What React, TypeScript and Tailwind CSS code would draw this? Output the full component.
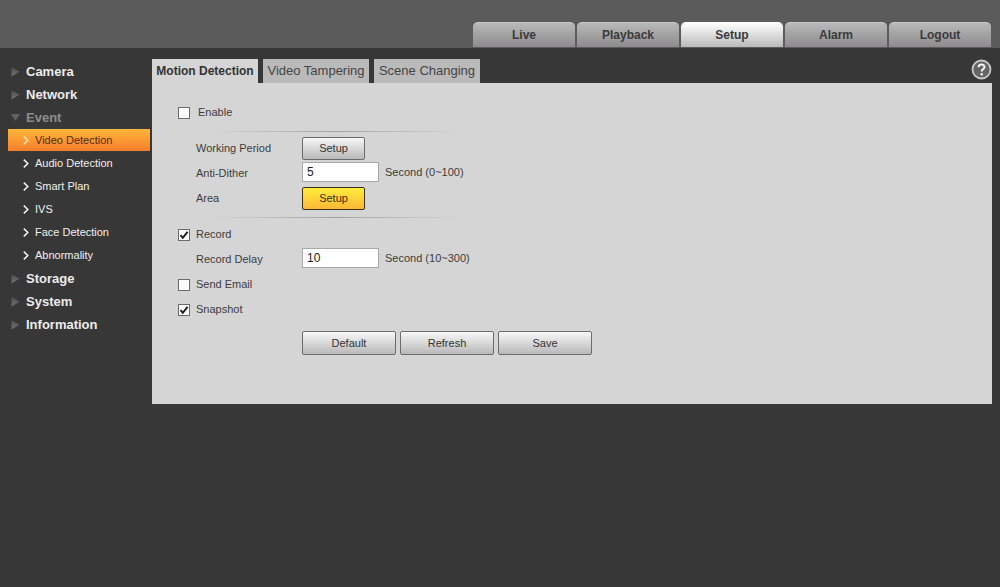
import { useState, type ReactNode } from "react";

const topTabs = ["Live", "Playback", "Setup", "Alarm", "Logout"];
const pageTabs = ["Motion Detection", "Video Tampering", "Scene Changing"];
const eventItems = [
  "Video Detection",
  "Audio Detection",
  "Smart Plan",
  "IVS",
  "Face Detection",
  "Abnormality",
];

function SectionLink({ label, open = false }: { label: string; open?: boolean }) {
  return (
    <a
      href="#"
      className={`flex h-[23px] items-center gap-1.5 pl-[3px] text-[13px] font-bold ${
        open ? "text-[#8c8c8c]" : "text-[#ececec]"
      }`}
    >
      <svg width="9" height="10" viewBox="0 0 9 10" aria-hidden="true">
        <defs>
          <linearGradient id="arrow" x1="0" y1="0" x2="0" y2="1">
            <stop offset="0" stopColor="#4c4c4c" />
            <stop offset="1" stopColor="#727272" />
          </linearGradient>
        </defs>
        <path d={open ? "M0 1H9L4.500 8Z" : "M0.500 0V9.500L8.500 4.800Z"} fill={open ? "#626262" : "url(#arrow)"} />
      </svg>
      {label}
    </a>
  );
}

function SubLink({ label, active }: { label: string; active: boolean }) {
  return (
    <a
      href="#"
      aria-current={active ? "page" : undefined}
      className={`mb-px flex h-[22px] items-center gap-1.5 pl-[15px] text-[11px] ${
        active
          ? "bg-linear-to-b from-[#fdb53c] to-[#f77d2b] text-[#4f2d12]"
          : "text-[#f0f0f0]"
      }`}
    >
      <svg width="6" height="9" viewBox="0 0 6 9" fill="none" aria-hidden="true">
        <path
          d="M0.800 0.600L4.800 4.500L0.800 8.400"
          stroke={active ? "#ffe3a8" : "#f4f4f4"}
          strokeWidth="1.500"
        />
      </svg>
      {label}
    </a>
  );
}

function CheckRow({
  id,
  label,
  initial = false,
  gap = "gap-1.5",
}: {
  id: string;
  label: string;
  initial?: boolean;
  gap?: string;
}) {
  const [checked, setChecked] = useState(initial);
  return (
    <div className={`flex h-[25px] items-center ${gap}`}>
      <span className="grid">
        <input
          id={id}
          type="checkbox"
          checked={checked}
          onChange={(e) => setChecked(e.target.checked)}
          className="col-start-1 row-start-1 size-3 appearance-none border border-[#6a6a6a] bg-[#fdfdfd]"
        />
        {checked && (
          <svg
            viewBox="0 0 12 12"
            className="pointer-events-none col-start-1 row-start-1 size-3"
            fill="none"
            aria-hidden="true"
          >
            <path d="M2.500 6.200L4.800 8.800L9.600 2.800" stroke="#1c1c1c" strokeWidth="1.900" />
          </svg>
        )}
      </span>
      <label htmlFor={id}>{label}</label>
    </div>
  );
}

function FieldRow({ label, htmlFor, children }: { label: string; htmlFor: string; children: ReactNode }) {
  return (
    <div className="flex h-[25px] items-center pl-[18px]">
      <label htmlFor={htmlFor} className="w-[106px] shrink-0">
        {label}
      </label>
      {children}
    </div>
  );
}

function NumberField({ id, value, hint }: { id: string; value: string; hint: string }) {
  return (
    <div className="flex items-center gap-1.5 pb-[3px]">
      <input
        id={id}
        type="text"
        defaultValue={value}
        className="h-5 w-[77px] border border-[#a9a9a9] bg-white px-1 text-[12px] text-[#1c1c1c]"
      />
      <span>{hint}</span>
    </div>
  );
}

const buttonBase = "rounded-[2px] border text-center";
const grayButton =
  "border-[#6c6c6c] bg-linear-to-b from-[#f8f8f8] to-[#b9b9b9] text-[#333333]";
const yellowButton =
  "border-[#3a3218] bg-linear-to-b from-[#ffee3c] to-[#fcb736] text-[#3c2c06]";

function Divider() {
  return (
    <div className="pt-1.5 pb-1 pl-9">
      <div className="h-px w-[244px] bg-linear-to-r from-transparent via-[#a2a2a2] to-transparent" />
    </div>
  );
}

export default function App() {
  return (
    <div className="flex min-h-screen flex-col bg-[#373737] font-['Liberation_Sans',Arial,sans-serif]">
      <header className="flex h-12 items-end justify-end bg-[#5b5b5b] pr-[9px]">
        <nav className="flex gap-0.5 pb-px">
          {topTabs.map((tab) => (
            <a
              key={tab}
              href="#"
              className={`flex h-[25px] w-[102px] items-center justify-center rounded-t-[5px] border-t text-[12px] font-bold text-[#3a3a3a] ${
                tab === "Setup"
                  ? "border-white bg-linear-to-b from-[#ffffff] to-[#bababa]"
                  : "border-[#c9c9c9] bg-linear-to-b from-[#b9b9b9] to-[#8d8b8d]"
              }`}
            >
              {tab}
            </a>
          ))}
        </nav>
      </header>

      <div className="flex grow items-start gap-0.5 px-2 pt-[11px]">
        <nav className="w-[142px] shrink-0 pt-px">
          <SectionLink label="Camera" />
          <SectionLink label="Network" />
          <SectionLink label="Event" open />
          {eventItems.map((item) => (
            <SubLink key={item} label={item} active={item === "Video Detection"} />
          ))}
          <SectionLink label="Storage" />
          <SectionLink label="System" />
          <SectionLink label="Information" />
        </nav>

        <main className="grow">
          <div className="flex items-start justify-between">
            <nav className="flex gap-[5px]">
              {pageTabs.map((tab, i) => (
                <a
                  key={tab}
                  href="#"
                  className={`flex h-6 w-[106px] items-center justify-center whitespace-nowrap ${
                    i === 0
                      ? "bg-[#d5d5d5] text-[12px] font-bold text-[#333333]"
                      : "bg-[#bababa] text-[13px] text-[#444444]"
                  }`}
                >
                  {tab}
                </a>
              ))}
            </nav>
            <button type="button" aria-label="Help">
              <svg width="21" height="21" viewBox="0 0 21 21" fill="none">
                <circle cx="10.500" cy="10.500" r="9" fill="#646464" stroke="#c9c9c9" strokeWidth="1.800" />
                <path
                  d="M7.600 8.300C7.600 4.600 13.500 4.700 13.500 7.900C13.500 10.100 10.700 10 10.700 12.500"
                  stroke="#f2f2f2"
                  strokeWidth="2.100"
                />
                <circle cx="10.700" cy="15.200" r="1.300" fill="#f2f2f2" />
              </svg>
            </button>
          </div>

          <form
            className="bg-[#d5d5d5] pt-[17px] pb-[49px] pl-[26px] text-[11px] text-[#3c3c3c]"
            onSubmit={(e) => e.preventDefault()}
          >
            <CheckRow id="enable" label="Enable" gap="gap-2" />
            <Divider />
            <FieldRow label="Working Period" htmlFor="period">
              <button id="period" type="button" className={`${buttonBase} ${grayButton} h-[23px] w-[63px]`}>
                Setup
              </button>
            </FieldRow>
            <FieldRow label="Anti-Dither" htmlFor="dither">
              <NumberField id="dither" value="5" hint="Second (0~100)" />
            </FieldRow>
            <FieldRow label="Area" htmlFor="area">
              <button id="area" type="button" className={`${buttonBase} ${yellowButton} h-[23px] w-[63px]`}>
                Setup
              </button>
            </FieldRow>
            <Divider />
            <CheckRow id="record" label="Record" initial />
            <FieldRow label="Record Delay" htmlFor="delay">
              <NumberField id="delay" value="10" hint="Second (10~300)" />
            </FieldRow>
            <CheckRow id="email" label="Send Email" />
            <CheckRow id="snapshot" label="Snapshot" initial />
            <div className="flex gap-1 pt-[9px] pl-[124px]">
              {["Default", "Refresh", "Save"].map((name) => (
                <button key={name} type="button" className={`${buttonBase} ${grayButton} h-6 w-[94px]`}>
                  {name}
                </button>
              ))}
            </div>
          </form>
        </main>
      </div>
    </div>
  );
}
